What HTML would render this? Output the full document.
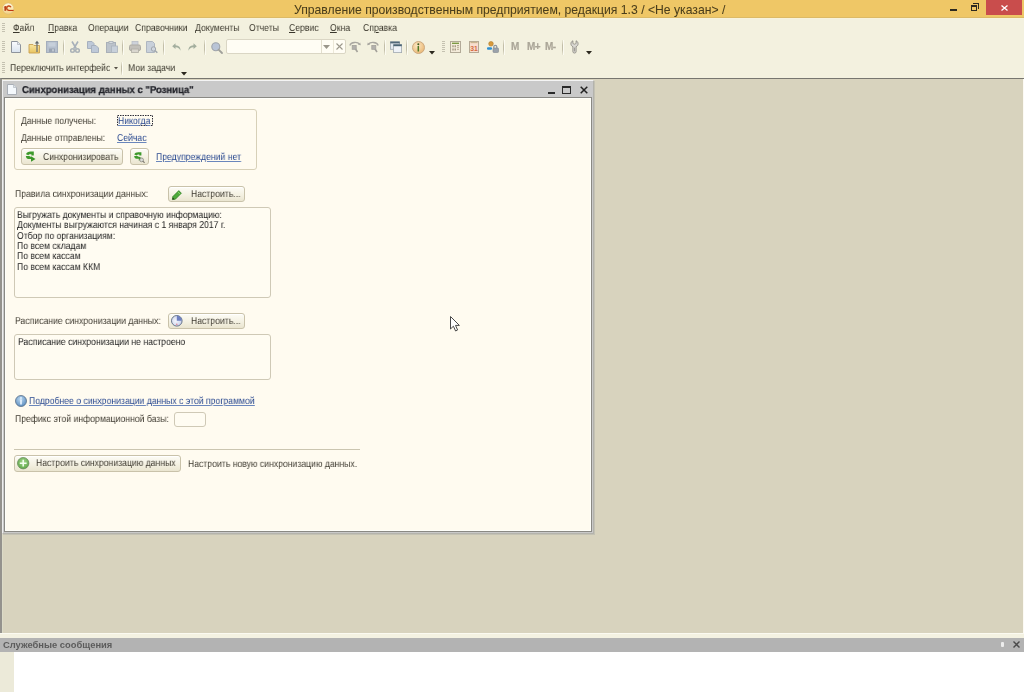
<!DOCTYPE html>
<html><head><meta charset="utf-8">
<style>
*{margin:0;padding:0;box-sizing:border-box}
html,body{-webkit-font-smoothing:antialiased;width:1024px;height:692px;overflow:hidden;background:#F3F1DF;font-family:"Liberation Sans",sans-serif;}
.a{position:absolute}
.t{position:absolute;will-change:transform;-webkit-text-stroke:0.2px currentColor;white-space:pre;font-size:8.7px;line-height:10px;color:#35322a}
.f{position:absolute;will-change:transform;text-rendering:geometricPrecision;white-space:pre;font-size:10px;line-height:10px;color:#403c32;transform:scaleX(0.865);transform-origin:0 0}
.mm{color:#3a372c}
.m{position:absolute;will-change:transform;-webkit-text-stroke:0.2px currentColor;white-space:pre;font-size:9px;line-height:10px;color:#3a372c;letter-spacing:-0.1px}
.lk{color:#2B4A90;text-decoration:underline;text-decoration-color:#6A86BC;text-underline-offset:0.6px}
.sep{position:absolute;width:1px;background:linear-gradient(rgba(190,186,165,0.2),#C2BEA8 35%,#C2BEA8 65%,rgba(190,186,165,0.2));box-shadow:1px 0 0 #FCFBF2}
.grip{position:absolute;width:3px;background:repeating-linear-gradient(to bottom,#C4C1B0 0 1px,#F3F1DF 1px 2px)}
.btn{position:absolute;border:1px solid #C9C2AA;border-radius:3px;background:linear-gradient(#FDFCF6,#F4F1E2 55%,#EAE5D0);box-shadow:inset 0 1px 0 #FFFFFF}
.box{position:absolute;border:1px solid #CFC9B6;border-radius:3px;background:#FFFCF2}
svg{position:absolute;overflow:visible}
#title{left:0;top:0;width:1024px;height:18px;background:#EFC766;border-bottom:1px solid #DCBA66}
#mdi{left:0;top:78px;width:1024px;height:555px;background:#D8D3BE;border-top:1px solid #77766f;border-left:2px solid #94928D;box-shadow:inset 1px 0 0 #DCDBC8,inset -1px 0 0 #FCFAF4}
#form{left:2px;top:80px;width:592px;height:454px;background:#C9C9C9;border-top:1px solid #F4F4F4;border-left:1px solid #EEEEEE;border-right:1px solid #B4B3AC;border-bottom:1px solid #B4B3AC;box-shadow:1px 1px 0 #C4C2B4}
#content{left:4px;top:97px;width:588px;height:435px;background:#FFFBF0;border:1px solid #8A8984;box-shadow:inset 1px 1px 0 #FFFFFA,inset -1px -1px 0 #FFFFFA}
</style></head><body>
<div class="a" id="title"></div>
<div class="a" style="left:0;top:18px;width:1024px;height:1px;background:#F8F3DC"></div>
<svg style="left:0;top:0" width="18" height="18" viewBox="0 0 18 18"><defs><linearGradient id="gLogo" x1="0" y1="0" x2="0" y2="1"><stop offset="0" stop-color="#FFFBE6"/><stop offset="0.5" stop-color="#FBE7B0"/><stop offset="1" stop-color="#F1CF84"/></linearGradient></defs><circle cx="8.2" cy="8.6" r="5.6" fill="url(#gLogo)" stroke="#D9BC78" stroke-width="0.6"/><rect x="4.4" y="6.2" width="1.7" height="4.6" fill="#B8401A"/><path d="M3.5 7.4L6.1 6.1V7.3Z" fill="#B8401A"/><path d="M10.9 7.3A2.2 2.2 0 1 0 8.6 10.3" stroke="#C44A1A" stroke-width="1.5" fill="none"/><rect x="8.2" y="9.9" width="5.4" height="1.1" fill="#C0380E"/></svg>
<div class="t" style="left:294px;top:1.7px;font-size:12.2px;line-height:16px;color:#4a3e1c;-webkit-text-stroke:0.05px #4a3e1c">Управление производственным предприятием, редакция 1.3 / &lt;Не указан&gt; /</div>
<!-- window controls -->
<div class="a" style="left:950px;top:9px;width:7px;height:2px;background:#2d2a20"></div>
<div class="a" style="left:971px;top:5px;width:6px;height:6px;border:1px solid #2d2a20;border-top-width:2px"></div>
<div class="a" style="left:973px;top:3px;width:6px;height:6px;border-top:1px solid #2d2a20;border-right:1px solid #2d2a20"></div>
<div class="a" style="left:986px;top:0;width:36px;height:15px;background:#C94D4C"></div>
<svg style="left:1001px;top:5px" width="7" height="6" viewBox="0 0 7 6"><path d="M0.5 0.5L6.5 5.5M6.5 0.5L0.5 5.5" stroke="#fff" stroke-width="1.3"/></svg>

<!-- menu bar -->
<div class="grip" style="left:2px;top:23px;height:9px"></div>
<div class="f mm" style="left:13px;top:24.2px"><u>Ф</u>айл</div>
<div class="f mm" style="left:48px;top:24.2px"><u>П</u>равка</div>
<div class="f mm" style="left:87.5px;top:24.2px">Операции</div>
<div class="f mm" style="left:134.5px;top:24.2px">Справочники</div>
<div class="f mm" style="left:195px;top:24.2px">Документы</div>
<div class="f mm" style="left:249px;top:24.2px">Отчеты</div>
<div class="f mm" style="left:288.5px;top:24.2px"><u>С</u>ервис</div>
<div class="f mm" style="left:330px;top:24.2px"><u>О</u>кна</div>
<div class="f mm" style="left:362.5px;top:24.2px">Сп<u>р</u>авка</div>

<!-- toolbar 1 -->
<div class="grip" style="left:2px;top:41px;height:11px"></div>
<div class="sep" style="left:63px;top:40px;height:15px"></div>
<div class="sep" style="left:122px;top:40px;height:15px"></div>
<div class="sep" style="left:163px;top:40px;height:15px"></div>
<div class="sep" style="left:204px;top:40px;height:15px"></div>
<div class="sep" style="left:384px;top:40px;height:15px"></div>
<div class="sep" style="left:406px;top:40px;height:15px"></div>
<div class="grip" style="left:442px;top:41px;height:11px"></div>
<div class="sep" style="left:503px;top:40px;height:15px"></div>
<div class="sep" style="left:562px;top:40px;height:15px"></div>
<!-- new -->
<svg style="left:11px;top:41px" width="10" height="12" viewBox="0 0 10 12"><defs><linearGradient id="gNew" x1="0" y1="0" x2="0" y2="1"><stop offset="0" stop-color="#FBFCFE"/><stop offset="1" stop-color="#D9E3EE"/></linearGradient></defs><path d="M0.5 0.5H6.5L9.5 3.5V11.5H0.5Z" fill="url(#gNew)" stroke="#8E949C"/><path d="M6.5 0.5V3.5H9.5" fill="#E6EAF0" stroke="#A8AEB6" stroke-width="0.7"/></svg>
<!-- open -->
<svg style="left:28px;top:40px" width="13" height="14" viewBox="0 0 13 14"><defs><linearGradient id="gFold" x1="0" y1="0" x2="0" y2="1"><stop offset="0" stop-color="#F8E6A0"/><stop offset="1" stop-color="#E9C460"/></linearGradient></defs><path d="M1 4.5H5L6 5.5H11.5V13H1Z" fill="url(#gFold)" stroke="#C9A050" stroke-width="0.9"/><path d="M9 12V3" stroke="#6E7478" stroke-width="1.3"/><path d="M6.8 3.6L9 0.8L11.2 3.6Z" fill="#5F666B"/></svg>
<!-- save (disabled) -->
<svg style="left:46px;top:41px" width="12" height="12" viewBox="0 0 12 12"><rect x="0.5" y="0.5" width="11" height="11" fill="#B6C0CE" stroke="#A4AEBC"/><rect x="2.5" y="1.5" width="7" height="4" fill="#C6CFDA"/><rect x="3" y="7.5" width="6" height="3.5" fill="#9AA4B2"/><rect x="6.2" y="8.2" width="1.6" height="2.2" fill="#C9D0D8"/></svg>
<!-- cut -->
<svg style="left:70px;top:41px" width="10" height="12" viewBox="0 0 10 12"><path d="M2 0.5L6.2 7.5M8 0.5L3.8 7.5" stroke="#A7B0BA" stroke-width="1.6"/><rect x="0.8" y="7.8" width="3.4" height="3.4" rx="1" fill="none" stroke="#9CA5AF" stroke-width="1.3"/><rect x="5.8" y="7.8" width="3.4" height="3.4" rx="1" fill="none" stroke="#9CA5AF" stroke-width="1.3"/></svg>
<!-- copy -->
<svg style="left:87px;top:41px" width="12" height="12" viewBox="0 0 12 12"><path d="M0.5 0.5H5L7 2.5V7.5H0.5Z" fill="#BEC9D8" stroke="#A6B0BE"/><path d="M4.5 4.5H9L11.5 7V11.5H4.5Z" fill="#BEC9D8" stroke="#A6B0BE"/></svg>
<!-- paste -->
<svg style="left:106px;top:41px" width="12" height="12" viewBox="0 0 12 12"><rect x="0.5" y="1.5" width="9" height="10" fill="#BCC3CB" stroke="#A9B0B8"/><rect x="3" y="0.5" width="4" height="2" fill="#D8DCE0" stroke="#A9B0B8" stroke-width="0.8"/><rect x="5.5" y="5" width="6" height="6.5" fill="#C8D0DA" stroke="#AAB2BC" stroke-width="0.8"/></svg>
<!-- print -->
<svg style="left:129px;top:41px" width="12" height="12" viewBox="0 0 12 12"><rect x="3" y="0.5" width="6" height="4" fill="#CDD2DA" stroke="#B8BEC6" stroke-width="0.8"/><rect x="0.5" y="4" width="11" height="5.5" rx="1.5" fill="#C2C0BA" stroke="#ADABA4"/><rect x="2.5" y="8" width="7" height="3.5" fill="#D9D6CE" stroke="#B0ADA5" stroke-width="0.8"/></svg>
<!-- preview -->
<svg style="left:146px;top:41px" width="12" height="12" viewBox="0 0 12 12"><path d="M0.5 0.5H6.5L8.5 2.5V11.5H0.5Z" fill="#C8D0DA" stroke="#AEB6C0"/><circle cx="7.5" cy="8" r="2.2" fill="#D0D6DE" stroke="#A0A6AE" stroke-width="1"/><path d="M9 9.5L11.3 11.8" stroke="#9EA4AC" stroke-width="1.4"/></svg>
<!-- undo -->
<svg style="left:172px;top:43px" width="9" height="8" viewBox="0 0 9 8"><path d="M3.5 0.3L0.2 3.3L3.5 6V4.3C6 4.2 7.5 5.5 8.5 7.8C8.6 4.5 7 2.4 3.5 2.3Z" fill="#A3AE9E"/></svg>
<!-- redo -->
<svg style="left:188px;top:43px" width="9" height="8" viewBox="0 0 9 8"><path d="M5.5 0.3L8.8 3.3L5.5 6V4.3C3 4.2 1.5 5.5 0.5 7.8C0.4 4.5 2 2.4 5.5 2.3Z" fill="#A3AE9E"/></svg>
<!-- search -->
<svg style="left:211px;top:42px" width="12" height="12" viewBox="0 0 12 12"><circle cx="4.8" cy="4.8" r="4" fill="#B9C4D6" stroke="#9EA3AA" stroke-width="1.1"/><path d="M7.6 7.6L11 11" stroke="#A0A09A" stroke-width="1.8" stroke-linecap="round"/></svg>
<!-- refresh1 -->
<svg style="left:349px;top:41px" width="12" height="12" viewBox="0 0 12 12"><path d="M0.8 4.5C2 1 8.5 0.3 10.8 3.6" fill="none" stroke="#A9A7A0" stroke-width="1.3"/><path d="M9 3.8L11.8 4.2L11.2 1.4Z" fill="#A9A7A0"/><rect x="3.2" y="4.5" width="4" height="3.8" fill="#B2B0AC" stroke="#A3A19A" stroke-width="0.8"/><path d="M6.5 8L8.5 11" stroke="#A3A19A" stroke-width="1.6"/></svg>
<!-- refresh2 -->
<svg style="left:367px;top:41px" width="12" height="12" viewBox="0 0 12 12"><path d="M11.2 4.5C10 1 3.5 0.3 1.2 3.6" fill="none" stroke="#A9A7A0" stroke-width="1.3"/><path d="M3 3.8L0.2 4.2L0.8 1.4Z" fill="#A9A7A0"/><rect x="4.8" y="4.5" width="4" height="3.8" fill="#B2B0AC" stroke="#A3A19A" stroke-width="0.8"/><path d="M8 8L10 11" stroke="#A3A19A" stroke-width="1.6"/></svg>
<!-- windows -->
<svg style="left:390px;top:41px" width="13" height="12" viewBox="0 0 13 12"><rect x="0.5" y="0.8" width="9" height="7.5" fill="#E4EAF0" stroke="#9CA6B0" stroke-width="0.8"/><rect x="0.3" y="0.6" width="9.4" height="1.8" fill="#506878"/><rect x="3.6" y="3.6" width="8" height="8" fill="#EEF2F7" stroke="#A0A8B0" stroke-width="0.8"/><rect x="3.4" y="3.4" width="8.4" height="1.8" fill="#4A6474"/></svg>
<!-- info -->
<svg style="left:412px;top:41px" width="13" height="13" viewBox="0 0 13 13"><defs><radialGradient id="gInfo" cx="0.4" cy="0.35" r="0.7"><stop offset="0" stop-color="#FCE8C4"/><stop offset="1" stop-color="#E9B672"/></radialGradient></defs><circle cx="6.5" cy="6.5" r="6" fill="url(#gInfo)" stroke="#C7A47A" stroke-width="0.9"/><circle cx="6.3" cy="3.2" r="1" fill="#3D5A20"/><path d="M6.3 5V10.5" stroke="#4F7A26" stroke-width="1.5"/></svg>
<svg style="left:429px;top:51px" width="6" height="3.5" viewBox="0 0 6 3.5"><path d="M0 0H6L3 3.5Z" fill="#2b281e"/></svg>
<!-- calc -->
<svg style="left:450px;top:41px" width="11" height="12" viewBox="0 0 11 12"><rect x="0.5" y="0.5" width="10" height="11" fill="#F3EBDA" stroke="#B2AA98"/><rect x="2" y="1.6" width="7" height="1.4" fill="#7C9A44"/><path d="M3 4.2V6.2M3 7.4V9.6M5.2 4.2V6.2M5.2 7.4V9.6" stroke="#8E806A" stroke-width="1.1"/><path d="M7.2 4.5H8.8M7.2 6.3H8.8M7.2 8.3H8.8" stroke="#A0927A" stroke-width="0.9"/></svg>
<!-- calendar -->
<svg style="left:469px;top:41px" width="10" height="12" viewBox="0 0 10 12"><rect x="0.5" y="0.5" width="9" height="11" fill="#F8DECE" stroke="#B5AA96"/><path d="M1.5 1.5H8.5" stroke="#C9B48E" stroke-width="1.3"/><text x="1.2" y="10" font-family="Liberation Sans" font-size="6.8" font-weight="bold" fill="#D46A42">31</text></svg>
<!-- user lock -->
<svg style="left:487px;top:41px" width="12" height="12" viewBox="0 0 12 12"><circle cx="4" cy="2.8" r="2.3" fill="#D89A3A" stroke="#B07A2A" stroke-width="0.6"/><rect x="0" y="6.3" width="5" height="2.5" rx="1" fill="#2E8FD0"/><path d="M6.8 7V5.8C6.8 4 9.8 4 9.8 5.8V7" fill="none" stroke="#8C949C" stroke-width="1.2"/><rect x="6" y="7" width="5.5" height="4.5" rx="0.8" fill="#9AA2AA" stroke="#7F878F" stroke-width="0.6"/></svg>
<div class="t" style="left:510.5px;top:42px;font-weight:bold;font-size:10px;color:#ABA698;letter-spacing:-0.3px">M</div>
<div class="t" style="left:526.5px;top:42px;font-weight:bold;font-size:10px;color:#ABA698;letter-spacing:-0.5px">M+</div>
<div class="t" style="left:545px;top:42px;font-weight:bold;font-size:10px;color:#ABA698;letter-spacing:-0.5px">M-</div>
<!-- wrench -->
<svg style="left:570px;top:40px" width="9" height="14" viewBox="0 0 9 14"><path d="M2.9 0.8C0.3 1.7 0.2 5.7 2.9 6.7V11.8C2.9 13.5 6.1 13.5 6.1 11.8V6.7C8.8 5.7 8.7 1.7 6.1 0.8V3.1C6.1 4.5 2.9 4.5 2.9 3.1Z" fill="#DAD8D2" stroke="#8F8C85" stroke-width="0.9" stroke-linejoin="round"/><path d="M4.5 7.6V11.4" stroke="#A09D96" stroke-width="1"/></svg>
<svg style="left:585.5px;top:51px" width="6" height="3.5" viewBox="0 0 6 3.5"><path d="M0 0H6L3 3.5Z" fill="#2b281e"/></svg>

<!-- combo -->
<div class="a" style="left:226px;top:39px;width:120px;height:15px;border:1px solid #DAD6C4;border-radius:2px;background:#FFFDF4"></div>
<div class="a" style="left:321px;top:40px;width:1px;height:13px;background:#E2DECD"></div>
<div class="a" style="left:333px;top:40px;width:1px;height:13px;background:#ECE8D8"></div>
<svg style="left:323px;top:45px" width="7" height="4" viewBox="0 0 7 4"><path d="M0 0H7L3.5 4Z" fill="#9A968A"/></svg>
<svg style="left:336px;top:43px" width="7" height="7" viewBox="0 0 7 7"><path d="M0.5 0.5L6.5 6.5M6.5 0.5L0.5 6.5" stroke="#9C988C" stroke-width="1.1"/></svg>

<!-- toolbar 2 -->
<div class="grip" style="left:2px;top:62px;height:11px"></div>
<div class="f mm" style="left:9.5px;top:63.6px">Переключить интерфейс</div>
<svg style="left:113.8px;top:67px" width="4" height="2.5" viewBox="0 0 4 2.5"><path d="M0 0H4L2 2.5Z" fill="#555046"/></svg>
<div class="sep" style="left:121px;top:62px;height:13px"></div>
<div class="f mm" style="left:128px;top:63.6px">Мои задачи</div>
<svg style="left:180.5px;top:72px" width="6" height="3.5" viewBox="0 0 6 3.5"><path d="M0 0H6L3 3.5Z" fill="#2b281e"/></svg>

<div class="a" id="mdi"></div>
<div class="a" id="form"></div>
<svg style="left:7px;top:84px" width="10" height="11" viewBox="0 0 10 11"><path d="M0.5 0.5H6.5L9.5 3.5V10.5H0.5Z" fill="#F4F8FC" stroke="#A9AEB6"/><path d="M6.5 0.5V3.5H9.5" fill="#DDE3EA" stroke="#A9AEB6" stroke-width="0.6"/></svg>
<div class="f" style="left:21.5px;top:86.4px;font-weight:bold;font-size:10px;color:#22232a;-webkit-text-stroke:0.25px #22232a;transform:scaleX(0.95)">Синхронизация данных с "Розница"</div>
<div class="a" style="left:548px;top:92px;width:7px;height:2px;background:#2a2a2a"></div>
<div class="a" style="left:562px;top:86px;width:9px;height:8px;border:1px solid #2a2a2a;border-top-width:2px"></div>
<svg style="left:580px;top:86px" width="8" height="8" viewBox="0 0 8 8"><path d="M0.7 0.7L7.3 7.3M7.3 0.7L0.7 7.3" stroke="#222" stroke-width="1.5"/></svg>
<div class="a" id="content"></div>
<!-- group box -->
<div class="box" style="left:14px;top:109px;width:243px;height:61px;background:transparent;border-color:#D7D0B8"></div>
<div class="f" style="left:21px;top:116.8px">Данные получены:</div>
<svg style="left:117px;top:115px" width="36" height="11" viewBox="0 0 36 11"><rect x="0.5" y="0.5" width="35" height="10" fill="none" stroke="#2e2e3a" stroke-width="1" stroke-dasharray="1.5 1"/></svg>
<div class="f lk" style="left:117.5px;top:116.6px">Никогда</div>
<div class="f" style="left:21px;top:133.7px">Данные отправлены:</div>
<div class="f lk" style="left:117.4px;top:133.9px">Сейчас</div>
<div class="btn" style="left:21px;top:148px;width:102px;height:17px"></div>
<svg style="left:23px;top:149px" width="14" height="14" viewBox="0 0 14 14"><path d="M3 5.2C3.6 3.4 5.3 2.6 7.6 2.6H10.8V6.6H8.4V5.2H7.4C6.4 5.2 5.8 5.6 5.4 6.2Z" fill="#3E9A2C"/><path d="M2.8 6.9H6.4L8.6 8.2V9.9H5.2C4 9.9 3.1 8.8 2.8 6.9Z" fill="#3E9A2C"/><path d="M8 7.3L12.5 10L8 12.8Z" fill="#3A9428"/></svg>
<div class="f" style="left:43px;top:152.5px">Синхронизировать</div>
<div class="btn" style="left:130px;top:148px;width:19px;height:17px"></div>
<svg style="left:132px;top:150px" width="14" height="14" viewBox="0 0 14 14"><path d="M2.3 4.6C2.8 3 4.3 2.2 6.3 2.2H9.4V5.6H7.3V4.5H6.4C5.6 4.5 5 4.8 4.7 5.4Z" fill="#3E9A2C"/><path d="M2.1 6.1H5.4L7.4 7.3V8.8H4.3C3.2 8.8 2.4 7.8 2.1 6.1Z" fill="#3E9A2C"/><path d="M6.8 6.4L10.4 8.6L6.8 10.8Z" fill="#3A9428"/><circle cx="9.6" cy="9.9" r="1.9" fill="#D9DAD6" stroke="#8C8A82" stroke-width="0.8"/><path d="M10.9 11.2L12.6 12.9" stroke="#7E7A70" stroke-width="1.2"/></svg>
<div class="f lk" style="left:156.2px;top:152.7px">Предупреждений нет</div>

<div class="f" style="left:15px;top:190.0px">Правила синхронизации данных:</div>
<div class="btn" style="left:168px;top:185.5px;width:77px;height:16px"></div>
<svg style="left:171.5px;top:189.5px" width="10" height="10" viewBox="0 0 10 10"><path d="M6.8 0.6L9.4 3.2L3.4 9.2L0.4 9.6L0.8 6.6Z" fill="#4DAA3A" stroke="#2F7A22" stroke-width="0.7"/><path d="M5.8 1.8L8.3 4.3" stroke="#8BD86E" stroke-width="0.9"/><path d="M0.4 9.6L0.8 7.4L2.6 9.2Z" fill="#1E3A14"/></svg>
<div class="f" style="left:190.5px;top:190.0px">Настроить...</div>
<div class="box" style="left:14px;top:207px;width:257px;height:91px"></div>
<div class="f" style="left:17.2px;top:211.0px;color:#1a1a1a">Выгружать документы и справочную информацию:</div>
<div class="f" style="left:17.2px;top:221.4px;color:#1a1a1a">Документы выгружаются начиная с 1 января 2017 г.</div>
<div class="f" style="left:17.2px;top:231.5px;color:#1a1a1a">Отбор по организациям:</div>
<div class="f" style="left:17.2px;top:242.1px;color:#1a1a1a">По всем складам</div>
<div class="f" style="left:17.2px;top:252.2px;color:#1a1a1a">По всем кассам</div>
<div class="f" style="left:17.2px;top:262.6px;color:#1a1a1a">По всем кассам ККМ</div>

<div class="f" style="left:15px;top:317.1px">Расписание синхронизации данных:</div>
<div class="btn" style="left:168px;top:312.5px;width:77px;height:16px"></div>
<svg style="left:171px;top:315.3px" width="12" height="12" viewBox="0 0 12 12"><defs><radialGradient id="gGlobe" cx="0.4" cy="0.5" r="0.6"><stop offset="0" stop-color="#F4F6FC"/><stop offset="1" stop-color="#C8D0EA"/></radialGradient></defs><circle cx="5.8" cy="5.8" r="5.3" fill="url(#gGlobe)" stroke="#5A6A80" stroke-width="0.9"/><path d="M5.8 0.8V5.8H10.8A5 5 0 0 0 5.8 0.8Z" fill="#6E80C0"/><circle cx="5.8" cy="9.4" r="0.8" fill="#E08A9A"/></svg>
<div class="f" style="left:190.5px;top:317.3px">Настроить...</div>
<div class="box" style="left:14px;top:334px;width:257px;height:46px"></div>
<div class="f" style="left:17.5px;top:337.5px;color:#1a1a1a">Расписание синхронизации не настроено</div>

<svg style="left:14.5px;top:394.5px" width="12" height="12" viewBox="0 0 12 12"><defs><radialGradient id="gInf2" cx="0.45" cy="0.35" r="0.65"><stop offset="0" stop-color="#BCD8F0"/><stop offset="1" stop-color="#5C8EC0"/></radialGradient></defs><circle cx="6" cy="6" r="5.5" fill="url(#gInf2)" stroke="#5A7088" stroke-width="0.8"/><rect x="5.2" y="2.2" width="1.6" height="1.5" fill="#EAF6FF"/><rect x="5.2" y="4.5" width="1.6" height="5" fill="#EAF6FF"/></svg>
<div class="f lk" style="left:28.5px;top:396.6px">Подробнее о синхронизации данных с этой программой</div>
<div class="f" style="left:15px;top:415.3px">Префикс этой информационной базы:</div>
<div class="box" style="left:174px;top:412px;width:32px;height:15px"></div>

<div class="a" style="left:14px;top:449px;width:346px;height:1px;background:#CBC5B0"></div>
<div class="btn" style="left:14px;top:454.5px;width:167px;height:17px"></div>
<svg style="left:17px;top:457.4px" width="13" height="13" viewBox="0 0 13 13"><defs><radialGradient id="gPlus" cx="0.5" cy="0.4" r="0.6"><stop offset="0" stop-color="#A8D890"/><stop offset="1" stop-color="#5EA848"/></radialGradient></defs><circle cx="6.2" cy="6.2" r="5.7" fill="url(#gPlus)" stroke="#6C8C60" stroke-width="0.8"/><path d="M6.2 2.8V9.6M2.8 6.2H9.6" stroke="#F4FFF0" stroke-width="1.5"/></svg>
<div class="f" style="left:36.25px;top:459.3px">Настроить синхронизацию данных</div>
<div class="f" style="left:187.75px;top:459.6px">Настроить новую синхронизацию данных.</div>

<!-- cursor -->
<svg style="left:449.5px;top:315.5px" width="11" height="16" viewBox="0 0 11 16"><path d="M0.5 0.5V13L3.4 10.2L5.6 15L7.6 14L5.5 9.4H9.4Z" fill="#fff" stroke="#4a4a4a" stroke-width="1" stroke-linejoin="round"/></svg>


<div class="a" style="left:0;top:633px;width:1024px;height:5px;background:#F4F2E2;border-top:1px solid #FBFAF1"></div>
<div class="a" style="left:0;top:638px;width:1024px;height:14px;background:#B3B3B3"></div>
<div class="t" style="left:3px;top:640px;font-weight:bold;font-size:9.4px;color:#5c5c5c;-webkit-text-stroke:0">Служебные сообщения</div>
<div class="a" style="left:1001px;top:642px;width:3px;height:5px;background:#EDEDED;border-radius:1px"></div>
<svg style="left:1013px;top:641px" width="7" height="7" viewBox="0 0 7 7"><path d="M0.5 0.5L6.5 6.5M6.5 0.5L0.5 6.5" stroke="#4a4a4a" stroke-width="1.4"/></svg>
<div class="a" style="left:0;top:652px;width:1024px;height:40px;background:#FFFFFF"></div>
<div class="a" style="left:0;top:652px;width:14px;height:40px;background:#ECEAD9"></div>
</body></html>
